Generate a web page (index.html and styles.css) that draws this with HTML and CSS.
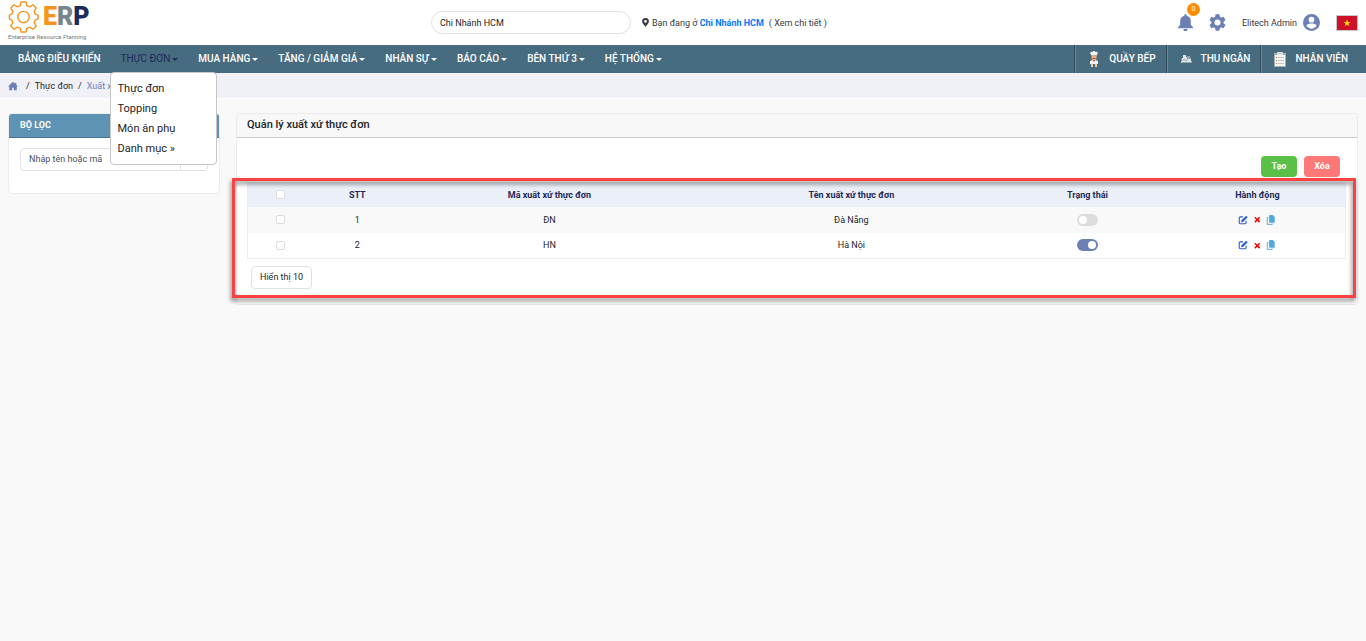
FILE: index.html
```html
<!DOCTYPE html>
<html lang="vi">
<head>
<meta charset="utf-8">
<title>Quản lý xuất xứ thực đơn</title>
<link rel="stylesheet" href="styles.css">
</head>
<body>
<svg class="sprite" aria-hidden="true">
  <symbol id="edit" viewBox="0 0 16 16"><path d="M8 3H3.500A1.500 1.500 0 0 0 2 4.500v8A1.500 1.500 0 0 0 3.500 14h8a1.500 1.500 0 0 0 1.500-1.500V9" fill="none" stroke="currentColor" stroke-width="1.800"/><path d="M5.500 8.500 13 1l2.500 2.500L8 11l-3 .5z" fill="currentColor"/></symbol>
  <symbol id="cross" viewBox="0 0 16 16"><path d="m2 3 11 11M13 3 2 14" fill="none" stroke="currentColor" stroke-width="3.500"/></symbol>
  <symbol id="copy" viewBox="0 0 16 16"><path d="M6 0h5l3 3v8.500a1 1 0 0 1-1 1H6a1 1 0 0 1-1-1V1a1 1 0 0 1 1-1z" fill="currentColor"/><path d="M4 4H2v11h8v-1.500" fill="none" stroke="currentColor" stroke-width="1.500"/></symbol>
</svg>

<header class="topbar">
  <a class="logo" href="#" aria-label="ERP">
    <span class="logo-main">
      <svg class="logo-gear" viewBox="0 0 32 34" aria-hidden="true"><path fill="none" stroke="#f7941d" stroke-width="1.500" stroke-linejoin="round" d="M13.500 1h5l1 4 3 1.200 3.500-2.200 3.500 3.500-2.200 3.500 1.200 3 3 1v4l-3 1-1.200 3 2.200 3.500-3.500 3.500-3.500-2.200-3 1.200-1 4h-5l-1-4-3-1.200L6 30l-3.500-3.500L4.700 23l-1.200-3L1 19v-4l2.500-1 1.200-3L2.500 7.500 6 4l3.500 2.200 3-1.200z"/><circle cx="16" cy="17" r="6" fill="none" stroke="#f7941d" stroke-width="1.500"/></svg>
      <span class="logo-word"><b class="logo-e">E</b><b class="logo-r">R</b><b class="logo-p">P</b></span>
    </span>
    <span class="logo-sub">Enterprise Resource Planning</span>
  </a>
  <div class="branch">
    <input class="branch-input" type="text" value="Chi Nhánh HCM" aria-label="Chi nhánh">
    <svg class="pin" viewBox="0 0 12 16" aria-hidden="true"><path fill="#343a40" fill-rule="evenodd" d="M6 0a6 6 0 0 0-6 6c0 4 4 6 6 10 2-4 6-6 6-10a6 6 0 0 0-6-6zm0 3.500a2.500 2.500 0 1 1 0 5 2.500 2.500 0 0 1 0-5z"/></svg>
    <span class="branch-text">Bạn đang ở <a class="branch-name" href="#">Chi Nhánh HCM</a></span>
    <a class="branch-detail" href="#">( Xem chi tiết )</a>
  </div>
  <div class="account">
    <button class="icon-button bell" type="button" aria-label="Thông báo">
      <svg class="bell-icon" viewBox="0 0 14 16" aria-hidden="true"><path fill="currentColor" d="M6 1a1 1 0 0 1 2 0v.6c2.500.5 4 2.400 4 5V10l2 2.500v.8H0v-.8L2 10V6.600c0-2.600 1.500-4.500 4-5zM5 14.200h4a2 2 0 0 1-4 0z"/></svg>
      <span class="badge">0</span>
    </button>
    <button class="icon-button" type="button" aria-label="Cài đặt">
      <svg class="gear-icon" viewBox="2 2 20 20" aria-hidden="true"><path fill="currentColor" d="M19.140 12.940c.04-.3.060-.61.060-.94s-.02-.64-.07-.94l2.030-1.580c.18-.14.230-.41.120-.61l-1.920-3.320c-.12-.22-.37-.29-.59-.22l-2.390.96c-.5-.38-1.030-.7-1.620-.94l-.36-2.540c-.04-.24-.24-.41-.48-.41h-3.840c-.24 0-.43.170-.47.410l-.36 2.540c-.59.240-1.130.570-1.620.940l-2.390-.96c-.22-.08-.47 0-.59.220L2.740 8.870c-.12.210-.08.470.120.610l2.030 1.580c-.05.300-.09.630-.09.940s.02.640.070.940l-2.030 1.580c-.18.140-.23.410-.12.610l1.920 3.320c.12.220.370.290.590.220l2.390-.96c.5.380 1.030.700 1.620.940l.36 2.540c.05.240.240.410.480.410h3.840c.24 0 .44-.17.470-.41l.36-2.540c.59-.24 1.130-.56 1.620-.94l2.390.96c.22.080.470 0 .590-.22l1.920-3.320c.12-.22.070-.47-.12-.61l-2.010-1.580zM12 15.600A3.600 3.600 0 1 1 12 8.400a3.600 3.600 0 0 1 0 7.200z"/></svg>
    </button>
    <button class="user" type="button">Elitech Admin
      <svg class="user-icon" viewBox="0 0 18 18" aria-hidden="true"><circle cx="9" cy="9" r="9" fill="#6c80b6"/><circle cx="9" cy="6" r="3" fill="#fff"/><path d="M3.500 12.500C4 10.500 7 10 9 10s5 .5 5.500 2.500C13 14.500 11 15.500 9 15.500s-4-1-5.500-3z" fill="#fff"/></svg>
    </button>
    <button class="icon-button" type="button" aria-label="Tiếng Việt">
      <svg class="flag" viewBox="0 0 22 16" aria-hidden="true"><path fill="#ce1126" stroke="#c4c8cc" d="M.5.5h21v15H.5z"/><path fill="#fce100" d="m11 4.500.9 2.500h2.600l-2.100 1.600.8 2.600-2.200-1.600-2.200 1.600.8-2.600L7.500 7h2.600z"/></svg>
    </button>
  </div>
</header>

<nav class="nav">
  <ul class="menu">
    <li class="menu-item"><a class="menu-link" href="#">BẢNG ĐIỀU KHIỂN</a></li>
    <li class="menu-item"><a class="menu-link menu-active caret" href="#">THỰC ĐƠN</a>
      <ul class="dropdown">
        <li><a class="dropdown-link" href="#">Thực đơn</a></li>
        <li><a class="dropdown-link" href="#">Topping</a></li>
        <li><a class="dropdown-link" href="#">Món ăn phụ</a></li>
        <li><a class="dropdown-link" href="#">Danh mục »</a></li>
      </ul>
    </li>
    <li class="menu-item"><a class="menu-link caret" href="#">MUA HÀNG</a></li>
    <li class="menu-item"><a class="menu-link caret" href="#">TĂNG / GIẢM GIÁ</a></li>
    <li class="menu-item"><a class="menu-link caret" href="#">NHÂN SỰ</a></li>
    <li class="menu-item"><a class="menu-link caret" href="#">BÁO CÁO</a></li>
    <li class="menu-item"><a class="menu-link caret" href="#">BÊN THỨ 3</a></li>
    <li class="menu-item"><a class="menu-link caret" href="#">HỆ THỐNG</a></li>
  </ul>
  <div class="shortcuts">
    <a class="shortcut" href="#"><svg class="shortcut-icon" viewBox="0 0 16 16" aria-hidden="true"><path fill="#f4f4f2" d="M5 4.500V3.500C3 2 5 0 6.500 1c1-1.300 2-1.300 3 0 1.500-1 3.500 1 1.500 2.500v1z"/><path fill="#e8b083" d="M5.500 4.500h5v2.500a2.500 2.500 0 0 1-5 0z"/><path fill="#8c5a3c" d="M6.500 7h3v1h-3z"/><path fill="#f4f4f2" d="M4 10c2-1.500 6-1.500 8 0v3H4z"/><path fill="#d9534f" d="M6.500 9h3L8 11z"/><path fill="#e8c8a8" d="M5 13h2v3H5zm4 0h2v3H9z"/></svg>QUẦY BẾP</a>
    <a class="shortcut" href="#"><svg class="shortcut-icon" viewBox="0 0 16 16" aria-hidden="true"><path fill="#dfe7e8" d="M5 4h3v2h4l2 6H3l1-5h1z"/><path fill="#8fa5a8" d="M9 5h3v3H9zM4 11h10v1H4z"/><path fill="#b5c4c6" d="M5 8h4l1 2H4z"/></svg>THU NGÂN</a>
    <a class="shortcut" href="#"><svg class="shortcut-icon" viewBox="0 0 16 16" aria-hidden="true"><rect x="2" y="2" width="12" height="14" rx="1" fill="#a9b0b0"/><path fill="#f5f5ef" d="M3 4h10v11H3z"/><path fill="#d6dada" d="M5 1h6v3H5z"/><path stroke="#c4caca" d="M6 6.500h6M6 9.500h6M6 12.500h6"/><path stroke="#d0605c" d="M4 6.500h1M4 12.500h1"/><path stroke="#5ba85b" d="M4 9.500h1"/></svg>NHÂN VIÊN</a>
  </div>
</nav>

<div class="breadcrumb">
  <a class="home" href="#" aria-label="Trang chủ"><svg class="home-icon" viewBox="0 0 12 12" aria-hidden="true"><path fill="currentColor" d="M6 1 0 6.500h1.500V11H5V8h2v3h3.500V6.500H12l-2-1.800V2H8.500v1.300z"/></svg></a>
  <span>/</span><a class="crumb" href="#">Thực đơn</a><span>/</span><span class="crumb-current">Xuất xứ</span>
</div>

<main class="content">
  <aside class="filter">
    <h2 class="filter-title">BỘ LỌC</h2>
    <div class="filter-body">
      <input class="search" type="text" placeholder="Nhập tên hoặc mã" aria-label="Nhập tên hoặc mã">
      <button class="search-button" type="button" aria-label="Tìm kiếm"></button>
    </div>
  </aside>

  <section class="panel">
    <h1 class="panel-title">Quản lý xuất xứ thực đơn</h1>
    <div class="actions">
      <button class="button create" type="button">Tạo</button>
      <button class="button delete" type="button">Xóa</button>
    </div>
    <div class="results">
      <table class="table">
        <colgroup><col class="col-check"><col class="col-index"><col class="col-code"><col class="col-name"><col class="col-status"><col class="col-action"></colgroup>
        <thead>
          <tr><th><input class="check" type="checkbox" aria-label="Chọn tất cả"></th><th>STT</th><th>Mã xuất xứ thực đơn</th><th>Tên xuất xứ thực đơn</th><th>Trạng thái</th><th>Hành động</th></tr>
        </thead>
        <tbody>
          <tr>
            <td><input class="check" type="checkbox" aria-label="Chọn ĐN"></td><td>1</td><td>ĐN</td><td>Đà Nẵng</td>
            <td><input class="switch" type="checkbox" aria-label="Trạng thái Đà Nẵng"></td>
            <td><div class="row-actions">
              <button class="row-button edit" type="button" aria-label="Sửa"><svg class="row-icon"><use href="#edit"/></svg></button>
              <button class="row-button remove" type="button" aria-label="Xóa dòng"><svg class="row-icon small"><use href="#cross"/></svg></button>
              <button class="row-button copy" type="button" aria-label="Sao chép"><svg class="row-icon"><use href="#copy"/></svg></button>
            </div></td>
          </tr>
          <tr>
            <td><input class="check" type="checkbox" aria-label="Chọn HN"></td><td>2</td><td>HN</td><td>Hà Nội</td>
            <td><input class="switch" type="checkbox" aria-label="Trạng thái Hà Nội" checked></td>
            <td><div class="row-actions">
              <button class="row-button edit" type="button" aria-label="Sửa"><svg class="row-icon"><use href="#edit"/></svg></button>
              <button class="row-button remove" type="button" aria-label="Xóa dòng"><svg class="row-icon small"><use href="#cross"/></svg></button>
              <button class="row-button copy" type="button" aria-label="Sao chép"><svg class="row-icon"><use href="#copy"/></svg></button>
            </div></td>
          </tr>
        </tbody>
      </table>
      <button class="page-size" type="button">Hiển thị 10</button>
      <div class="highlight"></div>
    </div>
  </section>
</main>
</body>
</html>
```
FILE: styles.css
```css
* { box-sizing: border-box; }
body { margin: 0; background: #f9f9f9; color: #212529; font: 9px/14px Roboto, "Noto Sans", sans-serif; }
a { color: inherit; text-decoration: none; }
button, input { font: inherit; color: inherit; }
button { padding: 0; border: 0; background: none; }
ul { margin: 0; padding: 0; list-style: none; }
h1, h2 { margin: 0; }
svg { display: block; flex: none; }
.sprite { position: absolute; width: 0; height: 0; }

.topbar { display: grid; grid-template-columns: 423px 1fr auto; align-items: center; height: 45px; padding: 0 8px; background: #fff; }
.logo { display: flex; flex-direction: column; width: 80px; padding-bottom: 3px; }
.logo-main { display: flex; align-items: center; gap: 4px; height: 32px; }
.logo-gear { width: 31px; height: 32px; }
.logo-word { font: bold 25px/32px Roboto, sans-serif; white-space: nowrap; }
.logo-e { color: #f7941d; }
.logo-r { color: #77848c; }
.logo-p { color: #1d2b5c; }
.logo-sub { font-size: 6px; line-height: 8px; color: #777; white-space: nowrap; }

.branch { display: flex; align-items: center; color: #343a40; line-height: 12px; }
.branch-input { width: 200px; height: 23px; margin-right: 11px; padding: 0 8px; border: 1px solid #dee2e6; border-radius: 12px; background: #fff; color: #212529; outline: 0; }
.pin { width: 7px; height: 9px; margin-right: 3px; }
.branch-name { color: #007bff; font-weight: 700; }
.branch-detail { margin-left: 5px; }

.account { display: flex; align-items: center; }
.icon-button { position: relative; color: #6c80b6; }
.bell { margin-right: 16px; }
.bell-icon { width: 15px; height: 17px; }
.badge { position: absolute; top: -11px; right: -7px; width: 13px; height: 13px; border-radius: 50%; background: #ff8c00; color: #fff; font-size: 7px; line-height: 13px; text-align: center; }
.gear-icon { width: 17px; height: 17px; }
.user { display: flex; align-items: center; gap: 6px; margin: 0 16px; color: #343a40; }
.user-icon { width: 17px; height: 17px; }
.flag { width: 22px; height: 16px; }

.nav { display: flex; justify-content: space-between; padding-left: 8px; background: #476b7f; color: #fff; font-size: 10px; font-weight: 500; line-height: 28px; }
.menu, .shortcuts { display: flex; }
.menu-item { position: relative; }
.menu-link { display: flex; align-items: center; padding: 0 10px; white-space: nowrap; }
.menu-active { color: #1d2b5c; font-weight: 400; }
.caret::after { content: ""; margin-left: 2px; border: 3px solid transparent; border-top-color: currentColor; border-bottom: 0; }
.dropdown { position: absolute; z-index: 2; top: 27px; left: -1px; width: 107px; padding: 6px 7px 5px; border: 1px solid #c4c6c8; border-radius: 4px; background: #fff; color: #212529; font-size: 11px; font-weight: 400; line-height: 20px; }
.dropdown-link { display: block; }
.shortcut { display: flex; align-items: center; gap: 7px; padding: 0 10px 0 11px; border-left: 1px solid #2f4a59; box-shadow: inset 1px 0 #67879a; white-space: nowrap; }
.shortcut:last-child { padding-right: 18px; }
.shortcut-icon { width: 16px; height: 16px; }

.breadcrumb { display: flex; align-items: center; gap: 5px; height: 26px; padding: 0 8px; border-bottom: 1px solid #fff; background: #f0f1f6; }
.home { margin-right: 3px; color: #6c80b6; }
.home-icon { width: 10px; height: 10px; }
.crumb-current { color: #6c80b6; }

.content { display: flex; align-items: flex-start; gap: 16px; padding: 14px 8px; }
.filter { width: 212px; border: 1px solid #ececec; border-radius: 4px; background: #fff; overflow: hidden; flex: none; }
.filter-title { padding: 0 11px; border-bottom: 1px solid #44748f; background: #5e93b3; color: #fff; font-size: 9px; font-weight: 700; line-height: 23px; }
.filter-body { display: flex; padding: 10px 11px 22px; }
.search { flex: 1; min-width: 0; height: 23px; padding: 0 8px 2px; border: 1px solid #dee2e6; border-radius: 4px 0 0 4px; background: #fff; outline: 0; }
.search::placeholder { color: #495057; opacity: 1; }
.search-button { width: 27px; border: 1px solid #dee2e6; border-left: 0; border-radius: 0 4px 4px 0; }

.panel { flex: 1; min-width: 0; border: 1px solid #ececec; border-radius: 3px; background: #fff; }
.panel-title { padding: 0 10px 1px; border-bottom: 1px solid #c9c9c9; background: #f8f8f8; font-size: 11px; font-weight: 500; line-height: 22px; }
.actions { display: flex; justify-content: flex-end; gap: 7px; padding: 18px 17px 0; }
.button { width: 36px; height: 21px; padding-bottom: 1px; border-radius: 4px; color: #fff; font-weight: 700; }
.create { background: #5bc048; }
.delete { background: #ff7878; }

.results { position: relative; padding: 5px 11px 15px 10px; }
.table { width: 100%; border-collapse: collapse; table-layout: fixed; border: 1px solid #ececec; text-align: center; }
.col-check { width: 6%; }
.col-index { width: 8%; }
.col-code { width: 27%; }
.col-name { width: 28%; }
.col-status { width: 15%; }
.col-action { width: 16%; }
.table th, .table td { height: 26px; padding: 0; vertical-align: middle; }
.table th { height: 24px; background: #ebeff8; color: #1d2b5c; font-weight: 700; }
.table tbody tr:first-child { background: #f9f9f9; }
.check { display: block; appearance: none; width: 9px; height: 9px; margin: 0 auto; border: 1px solid #dcdcdc; border-radius: 2px; background: #fff; }
.switch { position: relative; display: block; appearance: none; width: 21px; height: 12px; margin: 0 auto; border-radius: 6px; background: #dcdcdc; }
.switch::before { content: ""; position: absolute; top: 2px; left: 2px; width: 8px; height: 8px; border-radius: 50%; background: #fff; }
.switch:checked { background: #6c80b6; }
.switch:checked::before { left: 11px; }
.row-actions { display: flex; justify-content: center; align-items: center; gap: 4px; }
.row-icon { width: 10px; height: 10px; }
.row-button.remove { width: 10px; }
.row-icon.small { width: 7px; height: 7px; margin: 0 auto; }
.edit { color: #2f62c8; }
.remove { color: #f00; }
.copy { color: #55a8dc; }
.page-size { display: block; height: 23px; margin: 7px 0 0 4px; padding: 0 8px 2px; border: 1px solid #dee2e6; border-radius: 4px; background: #fff; }
.highlight { position: absolute; inset: 1px 1px 6px -5px; border: 3px solid #fb4141; filter: drop-shadow(-1px 3px 2px rgba(0, 0, 0, .5)); pointer-events: none; }
```
